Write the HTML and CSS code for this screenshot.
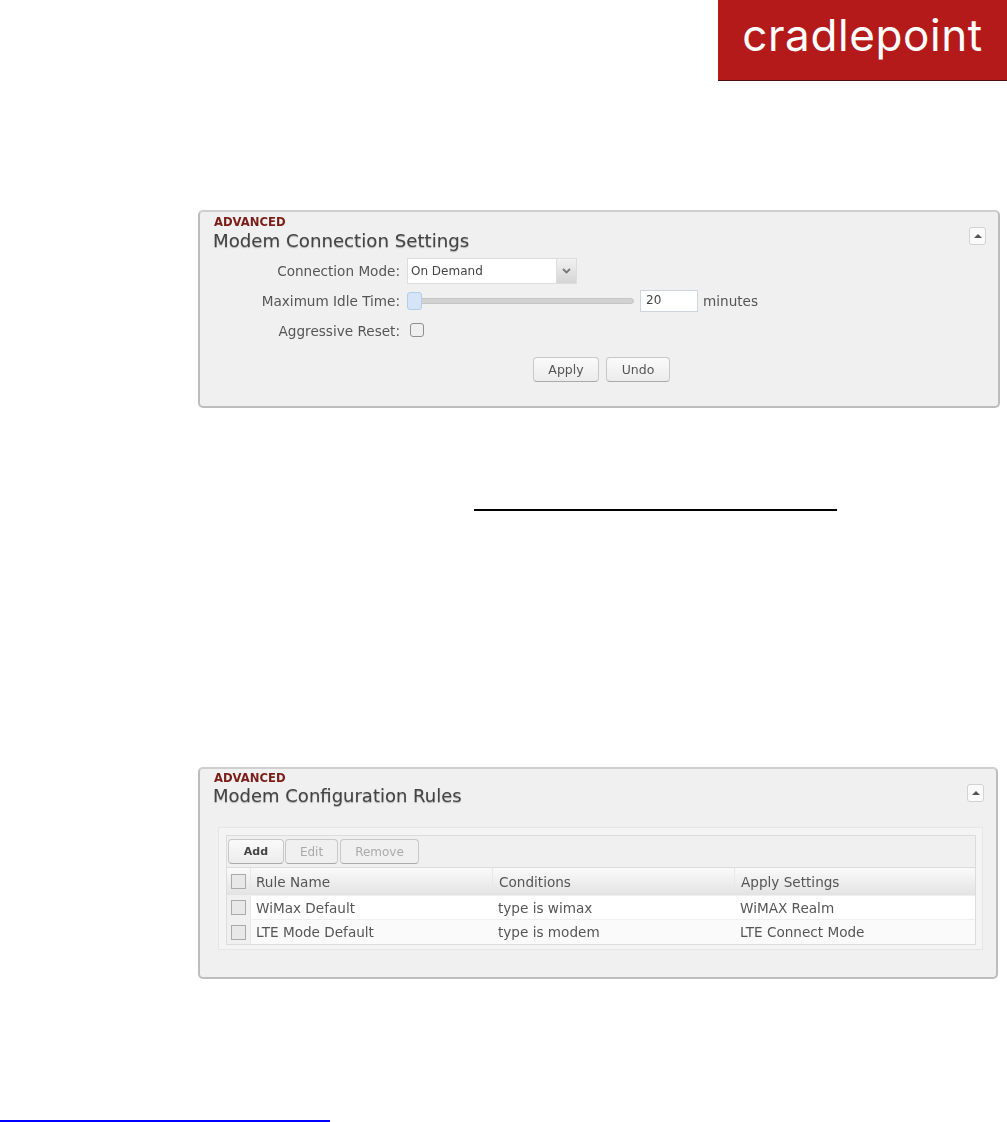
FILE: index.html
```html
<!DOCTYPE html>
<html lang="en">
<head>
<meta charset="utf-8">
<title>Modem Settings</title>
<link rel="stylesheet" href="styles.css">
</head>
<body>
<header class="top">
  <div class="logo"><span class="logo-text">cradlepoint</span></div>
</header>

<section class="panel panel-connection">
  <button class="collapse" type="button" aria-label="Collapse"><span class="tri"></span></button>
  <div class="eyebrow">ADVANCED</div>
  <h2 class="title">Modem Connection Settings</h2>
  <div class="form-row row-mode">
    <span class="label">Connection Mode:</span>
    <div class="select"><span class="select-value">On Demand</span><span class="select-arrow"><svg width="9" height="6" viewBox="0 0 9 6"><path d="M1 1l3.500 3.500L8 1" fill="none" stroke="#777" stroke-width="1.800"/></svg></span></div>
  </div>
  <div class="form-row row-idle">
    <span class="label">Maximum Idle Time:</span>
    <div class="slider"><span class="thumb"></span></div>
    <div class="num">20</div>
    <span class="unit">minutes</span>
  </div>
  <div class="form-row row-reset">
    <span class="label">Aggressive Reset:</span>
    <span class="check-round"></span>
  </div>
  <div class="actions">
    <button class="btn btn-apply" type="button">Apply</button>
    <button class="btn btn-undo" type="button">Undo</button>
  </div>
</section>

<div class="rule-black"></div>

<section class="panel panel-rules">
  <button class="collapse" type="button" aria-label="Collapse"><span class="tri"></span></button>
  <div class="eyebrow">ADVANCED</div>
  <h2 class="title title-rules">Modem Configuration Rules</h2>
  <div class="inner">
    <div class="grid">
      <div class="toolbar">
        <button class="btn tool tool-add" type="button">Add</button>
        <button class="btn tool tool-edit off" type="button">Edit</button>
        <button class="btn tool tool-remove off" type="button">Remove</button>
      </div>
      <div class="tr th">
        <span class="c-check"><span class="box"></span></span>
        <span class="cell">Rule Name</span>
        <span class="cell">Conditions</span>
        <span class="cell">Apply Settings</span>
      </div>
      <div class="tr td">
        <span class="c-check"><span class="box"></span></span>
        <span class="cell">WiMax Default</span>
        <span class="cell">type is wimax</span>
        <span class="cell">WiMAX Realm</span>
      </div>
      <div class="tr td alt">
        <span class="c-check"><span class="box"></span></span>
        <span class="cell">LTE Mode Default</span>
        <span class="cell">type is modem</span>
        <span class="cell">LTE Connect Mode</span>
      </div>
    </div>
  </div>
</section>

<div class="rule-blue"></div>
</body>
</html>
```

FILE: styles.css
```css
* { box-sizing: border-box; }
html, body { margin: 0; padding: 0; background: #fff; }
body { width: 1007px; height: 1122px; overflow: hidden; font-family: "DejaVu Sans", sans-serif; color: #444; }

.top { display: flex; justify-content: flex-end; }
.logo { width: 289px; height: 81px; background: #b51a1b; border-bottom: 1px solid #4a0f10; display: flex; justify-content: center; }
.logo-text { font-family: "Inter", sans-serif; font-weight: 400; font-size: 44px; line-height: 1; color: #fff; letter-spacing: 0.6px; margin-top: 13px; }

.panel { position: relative; margin-left: 198px; background: #f0f0f0; border: 2px solid #bdbdbd; border-top-color: #cfcfcf; border-radius: 5px; filter: blur(0.6px); }
.panel-connection { margin-top: 129px; width: 802px; height: 198px; padding: 4px 14px 0 14px; }
.panel-rules { margin-top: 256px; width: 800px; height: 212px; padding: 3px 14px 0 14px; }

.eyebrow { font-size: 11.6px; font-weight: 700; line-height: 13px; color: #7a1d18; }
.title { margin: 1px 0 0 -1px; font-size: 18.2px; font-weight: 400; line-height: 21px; color: #444; text-shadow: 0 1px 1px #aaa; }
.title-rules { margin-top: 0; font-size: 18px; }

.collapse { position: absolute; top: 15px; right: 12px; width: 17px; height: 18px; padding: 0; background: #fafafa; border: 1px solid #d2d2d2; border-radius: 3px; display: flex; align-items: center; justify-content: center; }
.tri { width: 0; height: 0; border-left: 4px solid transparent; border-right: 4px solid transparent; border-bottom: 4px solid #555; }

.form-row { display: flex; align-items: center; font-size: 13.6px; color: #555; }
.label { width: 186px; text-align: right; margin-right: 7px; flex: none; }
.row-mode { margin-top: 7px; height: 26px; }
.row-idle { margin-top: 4px; height: 26px; }
.row-reset { margin-top: 4px; height: 26px; }

.select { width: 170px; height: 26px; display: flex; background: #fff; border: 1px solid #ddd; font-size: 12px; color: #444; }
.select-value { flex: 1; padding-left: 3px; line-height: 24px; }
.select-arrow { width: 20px; background: linear-gradient(#f2f2f2, #d4d4d4); border-left: 1px solid #ddd; display: flex; align-items: center; justify-content: center; }

.slider { position: relative; width: 227px; height: 6px; background: #d2d2d2; border: 1px solid #c6c6c6; border-radius: 3px; }
.thumb { position: absolute; left: -1px; top: -7px; width: 15px; height: 18px; background: #d6e4f7; border: 1px solid #b4cbec; border-radius: 3px; }
.num { width: 58px; height: 22px; margin-left: 6px; background: #fff; border: 1px solid #cfd3dc; font-size: 12px; line-height: 18px; padding-left: 5px; color: #444; }
.unit { margin-left: 5px; }

.check-round { width: 14px; height: 14px; margin-left: 3px; margin-top: -2px; background: #efefef; border: 1px solid #8f8f8f; border-radius: 3px; }

.actions { display: flex; justify-content: flex-start; gap: 7px; margin: 13px 0 0 319px; }
.btn { height: 25px; padding: 0; font: 400 12.5px "DejaVu Sans", sans-serif; color: #555; background: linear-gradient(#fafafa, #ececec); border: 1px solid #c8c8c8; border-bottom-color: #aaa; border-radius: 4px; }
.btn-apply { width: 66px; }
.btn-undo { width: 64px; }

.inner { margin: 21px 1px 0 4px; width: 765px; height: 123px; padding: 7px 7px 0 7px; background: #f4f4f4; border: 1px solid #e6e6e6; }
.grid { width: 750px; border: 1px solid #dcdcdc; background: #f0f0f0; }
.toolbar { height: 32px; padding: 3px 0 0 1px; display: flex; gap: 1px; border-bottom: 1px solid #dcdcdc; }
.tool { height: 25px; font-size: 12px; }
.tool-add { width: 56px; font-weight: 700; font-size: 11px; color: #444; }
.tool-edit { width: 53px; }
.tool-remove { width: 79px; margin-left: 1px; }
.off { color: #aaa; background: #f0f0f0; }

.tr { display: grid; grid-template-columns: 23px 242px 242px 1fr; align-items: stretch; font-size: 13.6px; color: #555; }
.th { height: 27px; background: linear-gradient(#fafafa, #e3e3e3); }
.th .cell { padding-top: 1px; }
.td { height: 24px; background: #fff; border-top: 1px solid #efefef; }
.alt { height: 25px; background: #fafafa; }
.cell { display: flex; align-items: center; padding-left: 6px; border-left: 1px solid #e8e8e8; }
.tr .cell:nth-child(2) { padding-left: 5px; }
.td .cell { border-left: 0; }
.td .cell:nth-child(2) { border-left: 1px solid #e8e8e8; }
.c-check { display: flex; align-items: center; justify-content: center; background: #f0f0f0; }
.th .c-check { background: transparent; }
.box { width: 15px; height: 15px; background: #e8e8e8; border: 1px solid #aaa; }

.rule-black { margin: 101px 0 0 474px; width: 363px; height: 2px; background: #000; }
.rule-blue { margin-top: 141px; width: 330px; height: 2px; background: #0000ff; }
```
